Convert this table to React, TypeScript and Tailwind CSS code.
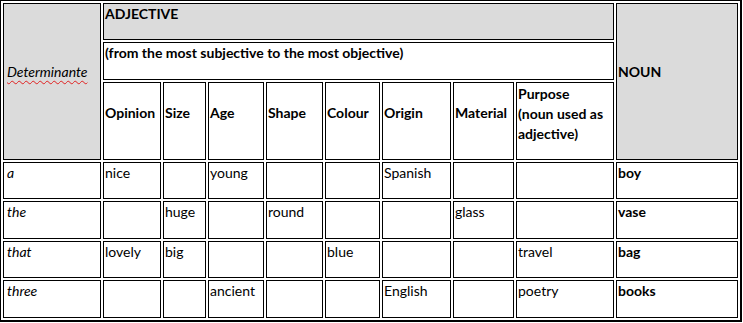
import React from 'react';

const headers = ['Opinion', 'Size', 'Age', 'Shape', 'Colour', 'Origin', 'Material'];

const rows: { det: string; cells: string[]; noun: string }[] = [
  { det: 'a', cells: ['nice', '', 'young', '', '', 'Spanish', '', ''], noun: 'boy' },
  { det: 'the', cells: ['', 'huge', '', 'round', '', '', 'glass', ''], noun: 'vase' },
  { det: 'that', cells: ['lovely', 'big', '', '', 'blue', '', '', 'travel'], noun: 'bag' },
  { det: 'three', cells: ['', '', 'ancient', '', '', 'English', '', 'poetry'], noun: 'books' },
];

const cell = 'border border-black bg-white pl-[1px] leading-[20px]';

export default function App() {
  return (
    <div className="w-[743px] h-[323px] bg-white" style={{ fontFamily: 'Lato, "Open Sans", sans-serif' }}>
      <div className="w-[742px] h-[322px] border-l border-t border-r-2 border-b-2 border-black p-[2px] text-[14px] text-black">
        <div className="grid h-full grid-cols-[98px_58px_43px_56px_57px_55px_69px_61px_98px_122px] grid-rows-[37px_38px_78px_37px_38px_37px_38px] gap-[2px]">
          <div className={`${cell} row-span-3 flex flex-col justify-center pb-[19px] !pl-[3px] !bg-[#dbdbdb] italic`}>
            <span className="underline decoration-wavy decoration-[#e02020] decoration-1 underline-offset-[3px]">Determinante</span>
          </div>
          <div className={`${cell} col-span-8 !bg-[#dbdbdb] font-bold`}>ADJECTIVE</div>
          <div className={`${cell} row-span-3 flex flex-col justify-center pb-[19px] !bg-[#dbdbdb] font-bold`}>NOUN</div>
          <div className={`${cell} col-span-8 font-bold`}>(from the most subjective to the most objective)</div>
          {headers.map((h) => (
            <div key={h} className={`${cell} flex flex-col justify-center pb-[16px] font-bold`}>{h}</div>
          ))}
          <div className={`${cell} flex flex-col justify-center pb-[15px] font-bold`}>
            <span>Purpose</span>
            <span>(noun used as</span>
            <span>adjective)</span>
          </div>
          {rows.map((r) => (
            <React.Fragment key={r.det}>
              <div className={`${cell} !pl-[3px] italic`}>{r.det}</div>
              {r.cells.map((c, i) => (
                <div key={i} className={cell}>{c}</div>
              ))}
              <div className={`${cell} font-bold`}>{r.noun}</div>
            </React.Fragment>
          ))}
        </div>
      </div>
    </div>
  );
}
